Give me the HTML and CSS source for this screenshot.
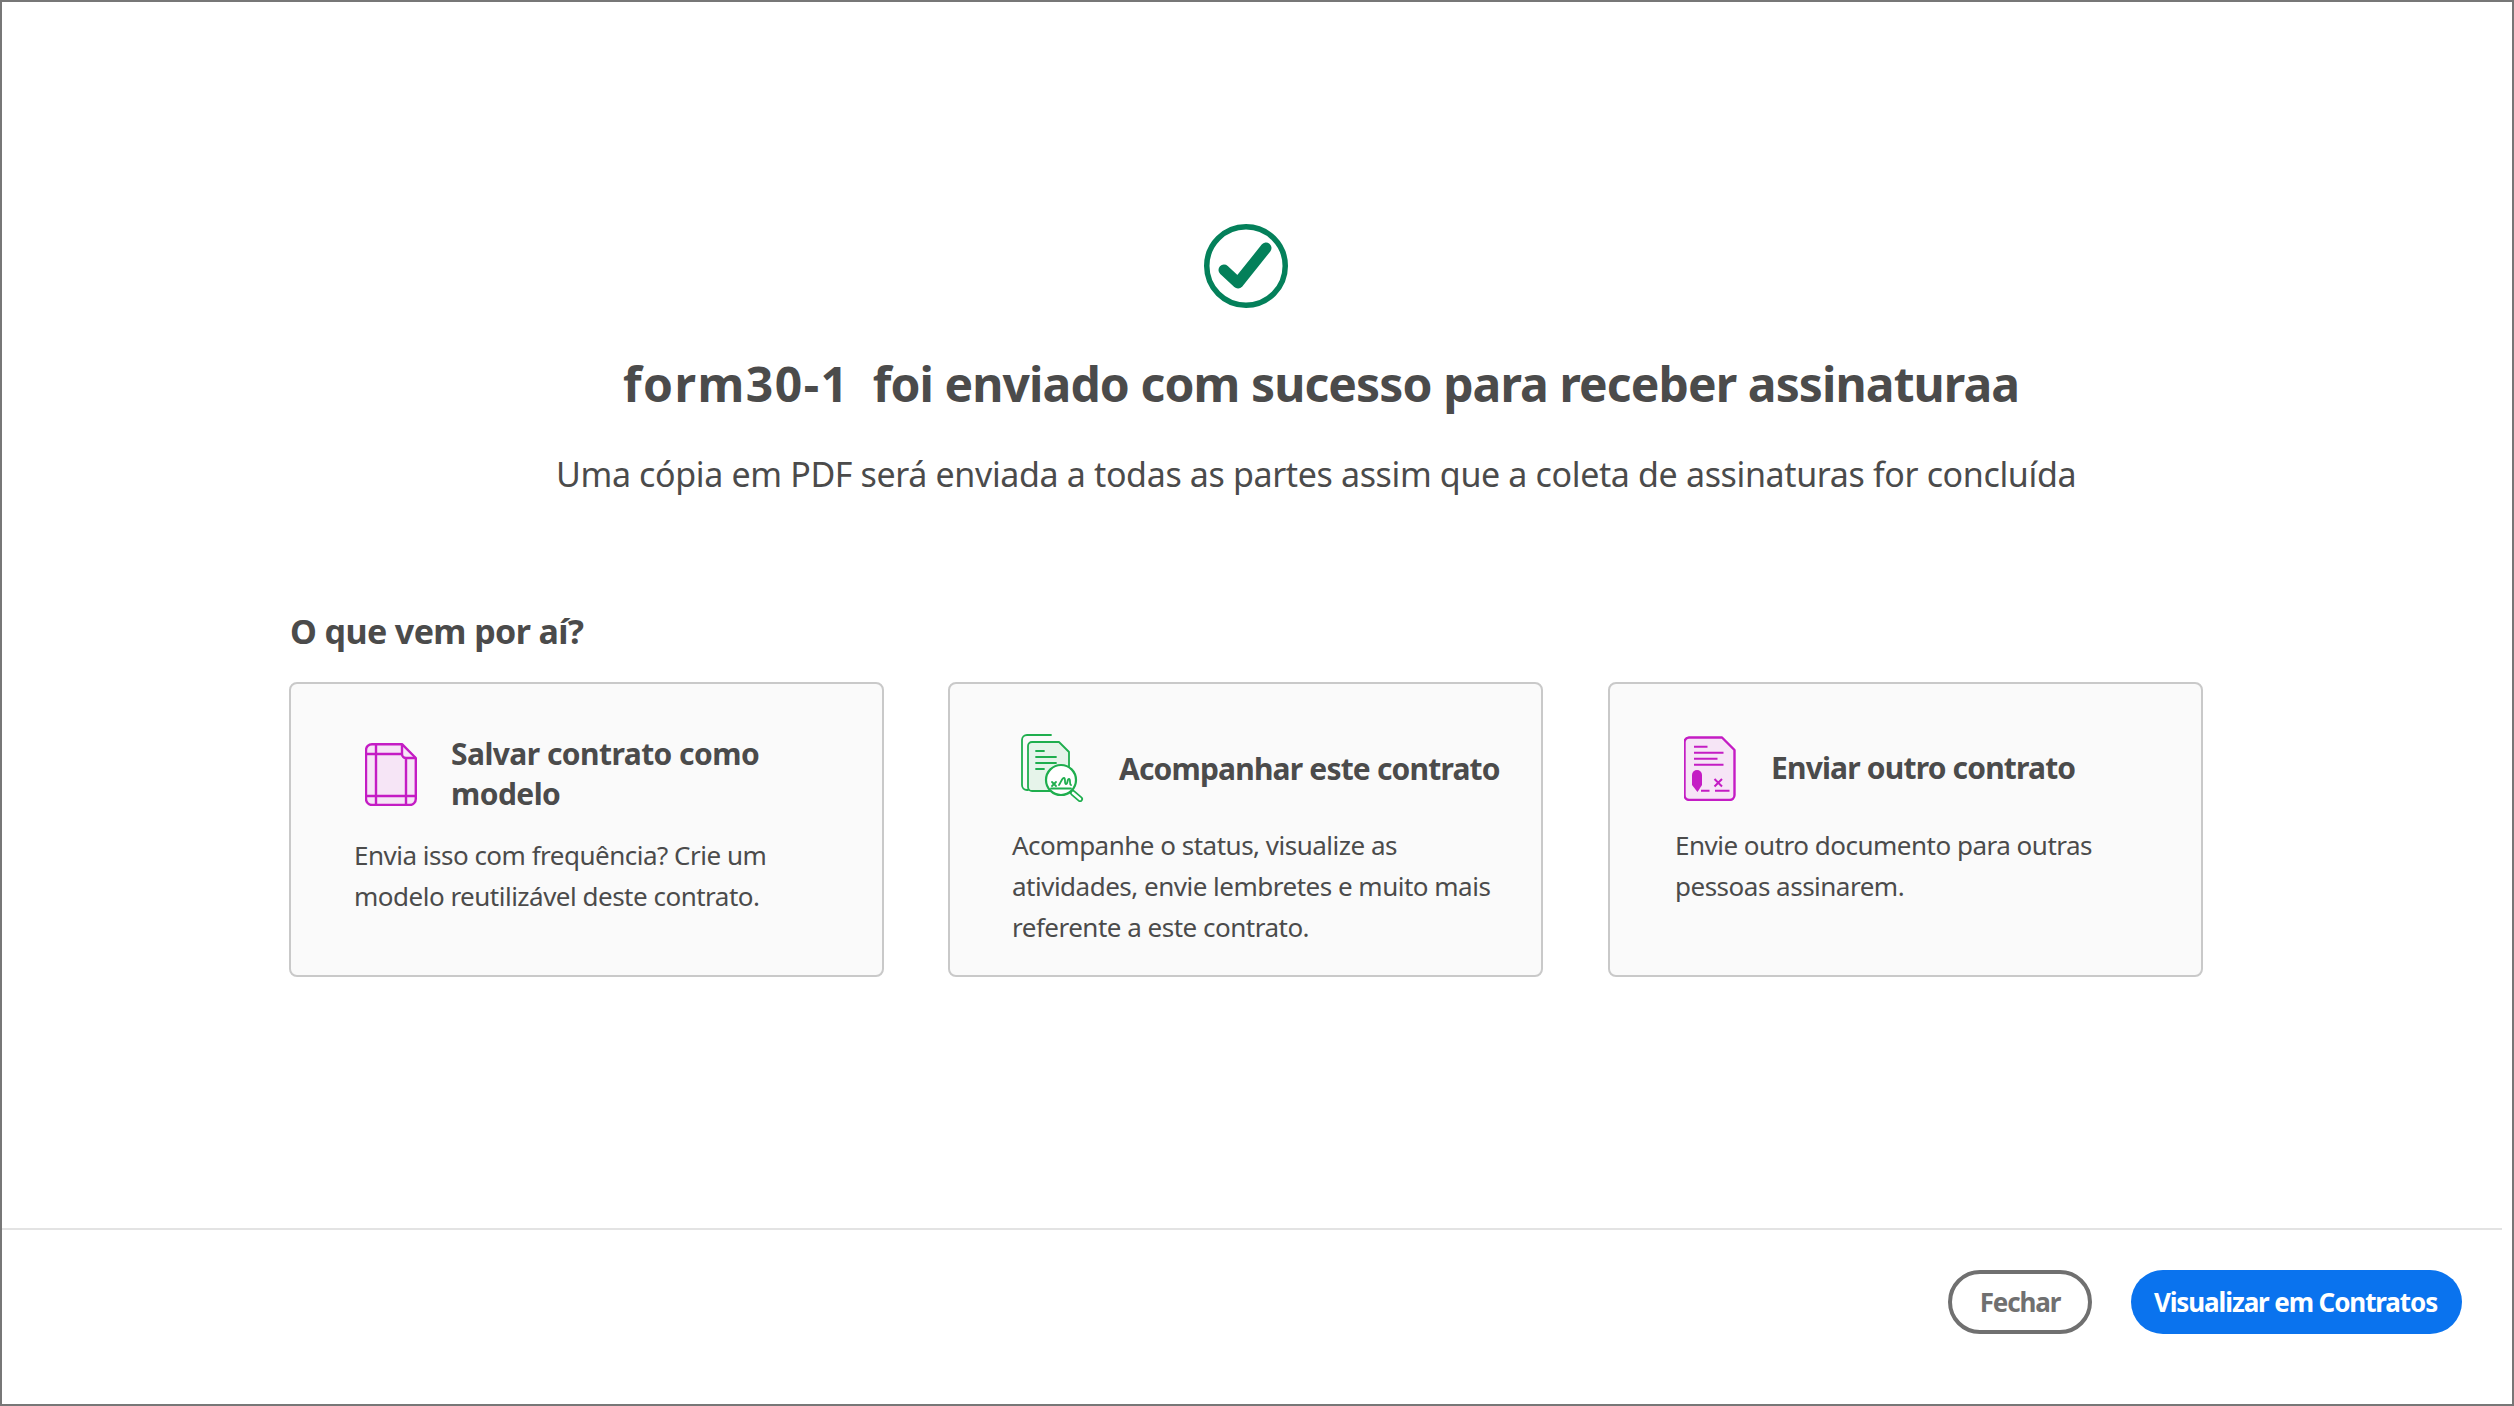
FILE: index.html
```html
<!DOCTYPE html>
<html lang="pt">
<head>
<meta charset="utf-8">
<title>form30-1</title>
<link rel="stylesheet" href="styles.css">
</head>
<body>
<div class="frame">
  <main class="main">
    <svg class="check" viewBox="0 0 84 84"><circle cx="42" cy="42" r="39.25" fill="none" stroke="#04805a" stroke-width="5.500"/><path d="M20 46 L34 59 L62 24" fill="none" stroke="#04805a" stroke-width="11" stroke-linecap="round" stroke-linejoin="round"/></svg>
    <h1 class="title"><span class="doc-name">form30-1</span>&nbsp; foi enviado com sucesso para receber assinaturaa</h1>
    <p class="subtitle">Uma cópia em PDF será enviada a todas as partes assim que a coleta de assinaturas for concluída</p>
    <h2 class="next">O que vem por aí?</h2>
    <div class="cards">
      <section class="card card-a">
        <div class="card-head">
          <svg class="icon icon-a" viewBox="0 0 52 63"><path d="M7 1.2H37L50.8 15V56a6 6 0 0 1-6 6H7a6 6 0 0 1-6-6V7.2a6 6 0 0 1 6-6z" fill="#f6e5f6" stroke="#c41cc4" stroke-width="2.4" stroke-linejoin="round"/><path d="M11 1V62M41 15V62M1 53H51M1 11H37M37 1V11a4 4 0 0 0 4 4H51" fill="none" stroke="#c41cc4" stroke-width="2.4"/></svg>
          <h3 class="card-title">Salvar contrato como modelo</h3>
        </div>
        <p class="card-text">Envia isso com frequência? Crie um modelo reutilizável deste contrato.</p>
      </section>
      <section class="card card-b">
        <div class="card-head">
          <svg class="icon icon-b" viewBox="15 14 63 68"><g fill="none" stroke="#1fae4e" stroke-width="1.8" stroke-linecap="round" stroke-linejoin="round"><path d="M45 15H21a5 5 0 0 0-5 5V65a5 5 0 0 0 5 5h1"/><path d="M26 22H53L63 32V50L45 71H26a4 4 0 0 1-4-4V26a4 4 0 0 1 4-4z" fill="#e6f4ea"/><path d="M30 31h8M30 37h20M30 43h20M30 49h8"/><circle cx="55" cy="60" r="15" fill="#fff" stroke-width="2.2"/><path d="M46 62l4 4M50 62l-4 4M53 65c2-3 3-7 5-7s0 6 2 6 1-5 3-5 0 5 2 6M45 68.500H65"/><path d="M67 73l7 6" stroke-width="6"/><path d="M67 73l7 6" stroke="#fff" stroke-width="2.600"/></g></svg>
          <h3 class="card-title">Acompanhar este contrato</h3>
        </div>
        <p class="card-text">Acompanhe o status, visualize as atividades, envie lembretes e muito mais referente a este contrato.</p>
      </section>
      <section class="card card-c">
        <div class="card-head">
          <svg class="icon icon-c" viewBox="14 11 52 65"><path d="M19 12.500H52L64.500 25V70a5 5 0 0 1-5 5H19.500a5 5 0 0 1-5-5V17a5 5 0 0 1 4.500-4.500z" fill="#f6e5f6" stroke="#c41cc4" stroke-width="2.400" stroke-linejoin="round"/><path d="M24 21.700H37.500M24 27.700H53.500M24 33.700H47.500M24 39.700H53.500M31 65.700H39.500M45 65.700H59.500M44.500 54L52 61.500M52 54L44.500 61.500" fill="none" stroke="#c41cc4" stroke-width="2"/><path d="M22 50a5 5 0 0 1 10 0V60L27.500 67 22 60z" fill="#c41cc4"/></svg>
          <h3 class="card-title">Enviar outro contrato</h3>
        </div>
        <p class="card-text">Envie outro documento para outras pessoas assinarem.</p>
      </section>
    </div>
  </main>
  <footer class="footer">
    <button class="btn btn-close">Fechar</button>
    <button class="btn btn-primary">Visualizar em Contratos</button>
  </footer>
</div>
</body>
</html>
```
FILE: styles.css
```css
* { box-sizing: border-box; }
html, body { margin: 0; padding: 0; background: #fff; }
body { font-family: "Noto Sans", "Open Sans", sans-serif; color: #4b4b4b; }
.frame {
  width: 2514px; height: 1406px;
  border: 2px solid #777;
  display: flex; flex-direction: column;
}
.main { flex: 1; padding: 222px 0 0 287px; display: flex; flex-direction: column; align-items: flex-start; }
.check { width: 84px; height: 84px; margin-left: 915px; display: block; flex: none; }
.title { margin: 46px 0 0 334px; font-size: 48px; line-height: 60px; font-weight: 700; letter-spacing: -0.9px; white-space: nowrap; }
.doc-name { letter-spacing: 1.5px; }
.subtitle { margin: 35px 0 0 267px; font-size: 34px; line-height: 50px; font-weight: 400; letter-spacing: -0.36px; white-space: nowrap; }
.next { margin: 110px 0 0 1px; font-size: 34px; line-height: 44px; font-weight: 700; letter-spacing: -0.6px; }
.cards { margin-top: 29px; display: flex; gap: 64px; }
.card { width: 595px; height: 295px; background: #fafafa; border: 2px solid #c9c9c9; border-radius: 8px; padding: 50px 30px 0 63px; }
.card-head { display: flex; align-items: center; gap: 35px; min-height: 68px; }
.card-a .card-head { padding-left: 11px; gap: 34px; }
.card-b { padding-left: 62px; }
.card-b .card-head { padding-left: 9px; }
.card-c { margin-left: 1px; padding-left: 65px; }
.card-c .card-head { padding-left: 9px; }
.icon { display: block; flex: none; }
.icon-a { width: 52px; height: 63px; }
.icon-b { width: 63px; height: 68px; }
.icon-c { width: 52px; height: 65px; }
.card-title { margin: 0; font-size: 30px; line-height: 40px; font-weight: 700; letter-spacing: -0.82px; }
.card-a .card-title { letter-spacing: -0.55px; }
.card-b .card-title { padding-top: 2px; }
.card-text { margin: 23px 0 0; font-size: 26px; line-height: 41px; letter-spacing: -0.5px; }
.card-a .card-text { margin-top: 21px; }
.footer { height: 176px; margin-right: 10px; border-top: 2px solid #e3e3e3; padding: 40px 40px 0 0; display: flex; justify-content: flex-end; align-items: flex-start; gap: 39px; }
.btn { height: 64px; border-radius: 32px; font: 700 26px/1 "Noto Sans", "Open Sans", sans-serif; letter-spacing: -1.1px; padding: 0; }
.btn-close { width: 144px; background: #fff; border: 4px solid #707070; color: #707070; }
.btn-primary { width: 331px; padding-right: 2px; background: #0a73ee; border: 0; color: #fff; }
```
